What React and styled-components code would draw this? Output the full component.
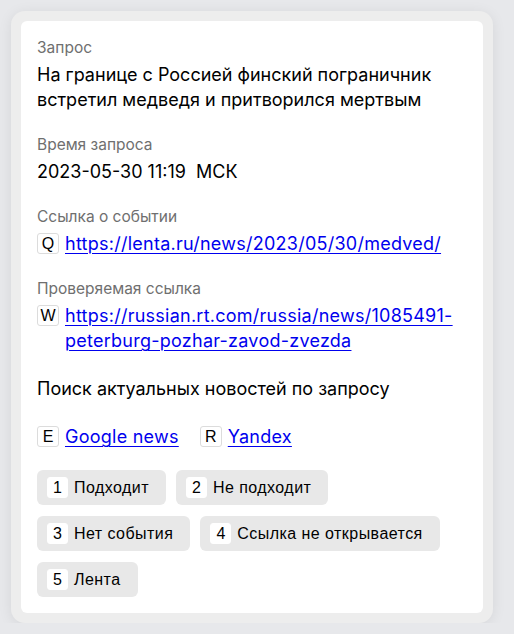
import React from 'react';
import styled, { createGlobalStyle } from 'styled-components';

const GlobalStyle = createGlobalStyle`
  html, body {
    margin: 0;
    padding: 0;
    background: #e7e8eb;
  }
  body {
    font-family: Inter, "Noto Sans", sans-serif;
    color: #000;
  }
`;

const Frame = styled.div`
  margin: 11px 21px 0 11px;
  padding: 10px;
  background: #ededed;
  border-radius: 14px;
  box-shadow: 0 2px 14px rgba(0, 0, 0, 0.08);
`;

const Card = styled.div`
  background: #fff;
  border-radius: 6px;
  padding: 17px 16px 16px;
`;

const Section = styled.div`
  margin-bottom: 23px;
`;

const Label = styled.div`
  font-size: 15.5px;
  line-height: 20px;
  color: #6f6f6f;
  margin-bottom: 4px;
`;

const Value = styled.div`
  font-size: 18px;
  line-height: 25px;
`;

const LinkRow = styled.div`
  display: flex;
  align-items: flex-start;
  gap: 6px;
  font-size: 18px;
  line-height: 25px;
`;

const Key = styled.span`
  flex: none;
  display: inline-flex;
  align-items: center;
  justify-content: center;
  width: ${(p) => p.$w || 22}px;
  height: 21px;
  margin-top: ${(p) => (p.$plain ? 0 : 2)}px;
  box-sizing: border-box;
  border: 1px solid ${(p) => (p.$plain ? '#fff' : '#dcdcdc')};
  border-radius: 3px;
  background: #fff;
  font-family: "Liberation Sans", Arial, sans-serif;
  font-size: 16px;
  letter-spacing: 0;
  line-height: 1;
  color: #000;
`;

const A = styled.a`
  color: #0000ee;
  letter-spacing: 0.25px;
  text-decoration: underline;
  text-underline-offset: 3px;
  text-decoration-thickness: 1px;
`;

const SearchRow = styled.div`
  display: flex;
  gap: 21px;
  margin-bottom: 21px;
`;

const Group = styled.div`
  display: flex;
  gap: 6px;
  font-size: 18px;
  line-height: 25px;
`;

const Buttons = styled.div`
  display: flex;
  flex-direction: column;
  align-items: flex-start;
  gap: 11px;
`;

const ButtonRow = styled.div`
  display: flex;
  gap: 10px;
`;

const Button = styled.button`
  display: flex;
  align-items: center;
  gap: 6px;
  height: 35px;
  padding: 0 17px 0 10px;
  border: none;
  border-radius: 6px;
  background: #e8e8e8;
  font-family: "Liberation Sans", Arial, sans-serif;
  font-size: 16px;
  letter-spacing: 0.45px;
  color: #000;
  cursor: pointer;
`;

const actions = [
  [['1', 'Подходит'], ['2', 'Не подходит']],
  [['3', 'Нет события'], ['4', 'Ссылка не открывается']],
  [['5', 'Лента']],
];

export default function App() {
  return (
    <>
      <GlobalStyle />
      <Frame>
        <Card>
          <Section>
            <Label>Запрос</Label>
            <Value>
              На границе с Россией финский пограничник встретил медведя и притворился мертвым
            </Value>
          </Section>
          <Section>
            <Label>Время запроса</Label>
            <Value>2023-05-30 11:19&nbsp; МСК</Value>
          </Section>
          <Section>
            <Label>Ссылка о событии</Label>
            <LinkRow>
              <Key>Q</Key>
              <A href="#">https://lenta.ru/news/2023/05/30/medved/</A>
            </LinkRow>
          </Section>
          <Section>
            <Label>Проверяемая ссылка</Label>
            <LinkRow>
              <Key>W</Key>
              <A href="#">https://russian.rt.com/russia/news/1085491-peterburg-pozhar-zavod-zvezda</A>
            </LinkRow>
          </Section>
          <Section>
            <Value>Поиск актуальных новостей по запросу</Value>
          </Section>
          <SearchRow>
            <Group>
              <Key>E</Key>
              <A href="#">Google news</A>
            </Group>
            <Group>
              <Key>R</Key>
              <A href="#">Yandex</A>
            </Group>
          </SearchRow>
          <Buttons>
            {actions.map((row, i) => (
              <ButtonRow key={i}>
                {row.map(([k, text]) => (
                  <Button key={k}>
                    <Key $plain $w={21}>{k}</Key>
                    {text}
                  </Button>
                ))}
              </ButtonRow>
            ))}
          </Buttons>
        </Card>
      </Frame>
    </>
  );
}
